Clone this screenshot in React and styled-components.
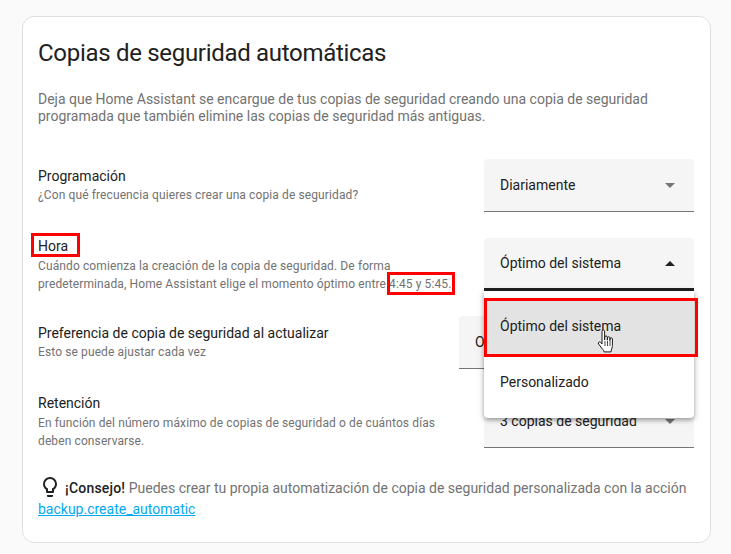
import React from "react";
import styled, { createGlobalStyle } from "styled-components";

const Global = createGlobalStyle`
  html, body { margin: 0; padding: 0; background: #fafafa; }
  body { font-family: Roboto, "Liberation Sans", sans-serif; color: #212121; }
  * { box-sizing: border-box; }
`;

const Page = styled.div`
  width: 731px;
  height: 554px;
  padding: 16px 20px 11px 22px;
  position: relative;
  overflow: hidden;
`;

const Card = styled.section`
  width: 689px;
  height: 527px;
  background: #fff;
  border: 1px solid #e0e0e0;
  border-radius: 12px;
  padding: 20px 16px 0 15px;
`;

const Title = styled.h1`
  margin: 0;
  font-size: 24px;
  font-weight: 400;
  line-height: 32px;
  letter-spacing: -0.3px;
  color: #212121;
`;

const Intro = styled.p`
  margin: 22px 0 0;
  font-size: 14px;
  line-height: 17px;
  color: #727272;
`;

const Rows = styled.div`
  margin-top: 34px;
  display: flex;
  flex-direction: column;
`;

const Row = styled.div`
  height: 53px;
  margin-top: ${(p) => p.$top || 0}px;
  display: flex;
  align-items: center;
  justify-content: space-between;
  gap: 16px;
`;

const RowText = styled.div`
  flex: 1;
  min-width: 0;
  padding-bottom: ${(p) => (p.$single ? 2 : 0)}px;
`;

const RowLabel = styled.div`
  font-size: 14px;
  line-height: 20px;
  color: #212121;
  ${(p) => p.$tight && "margin: -1px 0 1px;"}
`;

const RowHint = styled.div`
  font-size: 12px;
  line-height: 18px;
  letter-spacing: 0.11px;
  color: #727272;
`;

const Select = styled.div`
  flex: none;
  width: ${(p) => p.$width || 210}px;
  height: 53px;
  display: flex;
  align-items: center;
  justify-content: space-between;
  padding: 0 19px 0 16px;
  background: #f5f5f5;
  border-radius: 4px 4px 0 0;
  border-bottom: ${(p) => (p.$open ? "3px solid #212121" : "1px solid #757575")};
  font-size: 14px;
  color: #212121;
  white-space: nowrap;
  overflow: hidden;
`;

const Arrow = styled.span`
  flex: none;
  width: 0;
  height: 0;
  border-left: 5px solid transparent;
  border-right: 5px solid transparent;
  ${(p) =>
    p.$up
      ? "border-bottom: 5px solid #212121;"
      : "border-top: 5px solid #757575;"}
`;

const Menu = styled.div`
  position: absolute;
  left: 484px;
  top: 291px;
  width: 210px;
  padding: 7px 0 8px;
  background: #fff;
  border-radius: 0 0 4px 4px;
  box-shadow: 0 2px 4px rgba(0, 0, 0, 0.3), 0 1px 8px rgba(0, 0, 0, 0.15);
`;

const MenuItem = styled.div`
  height: 56px;
  display: flex;
  align-items: center;
  padding: 0 16px;
  font-size: 14px;
  color: #212121;
  background: ${(p) => (p.$active ? "#e3e3e3" : "#fff")};
`;

const Tip = styled.p`
  margin: 27px 0 0;
  font-size: 14px;
  line-height: 21px;
  color: #727272;
`;

const TipIcon = styled.svg`
  width: 24px;
  height: 24px;
  vertical-align: -6px;
  margin-right: 3px;
  fill: #212121;
`;

const TipLead = styled.strong`
  font-weight: 500;
  letter-spacing: 0.2px;
  color: #212121;
`;

const TipLink = styled.a`
  color: #03a9f4;
  text-decoration: underline;
`;

const Callout = styled.div`
  position: absolute;
  left: ${(p) => p.$x}px;
  top: ${(p) => p.$y}px;
  width: ${(p) => p.$w}px;
  height: ${(p) => p.$h}px;
  border: 3px solid #ff0000;
  pointer-events: none;
`;

const Cursor = styled.svg`
  position: absolute;
  left: 597px;
  top: 329px;
  width: 20px;
  height: 26px;
`;

export default function App() {
  return (
    <Page>
      <Global />
      <Card>
        <Title>Copias de seguridad automáticas</Title>
        <Intro>
          Deja que Home Assistant se encargue de tus copias de seguridad creando una copia de seguridad
          <br />
          programada que también elimine las copias de seguridad más antiguas.
        </Intro>
        <Rows>
          <Row>
            <RowText $single>
              <RowLabel>Programación</RowLabel>
              <RowHint>¿Con qué frecuencia quieres crear una copia de seguridad?</RowHint>
            </RowText>
            <Select>
              Diariamente
              <Arrow />
            </Select>
          </Row>
          <Row $top={26}>
            <RowText>
              <RowLabel $tight>Hora</RowLabel>
              <RowHint>
                Cuándo comienza la creación de la copia de seguridad. De forma
                <br />
                predeterminada, Home Assistant elige el momento óptimo entre 4:45 y 5:45.
              </RowHint>
            </RowText>
            <Select $open>
              Óptimo del sistema
              <Arrow $up />
            </Select>
          </Row>
          <Row $top={25}>
            <RowText $single>
              <RowLabel>Preferencia de copia de seguridad al actualizar</RowLabel>
              <RowHint>Esto se puede ajustar cada vez</RowHint>
            </RowText>
            <Select $width={235}>
              Omitir copia de seguridad
              <Arrow />
            </Select>
          </Row>
          <Row $top={26}>
            <RowText>
              <RowLabel $tight>Retención</RowLabel>
              <RowHint>
                En función del número máximo de copias de seguridad o de cuántos días
                <br />
                deben conservarse.
              </RowHint>
            </RowText>
            <Select>
              3 copias de seguridad
              <Arrow />
            </Select>
          </Row>
        </Rows>
        <Tip>
          <TipIcon viewBox="0 0 24 24" aria-hidden="true">
            <path d="M12,2A7,7 0 0,0 5,9C5,11.38 6.19,13.47 8,14.74V17A1,1 0 0,0 9,18H15A1,1 0 0,0 16,17V14.74C17.81,13.47 19,11.38 19,9A7,7 0 0,0 12,2M9,21A1,1 0 0,0 10,22H14A1,1 0 0,0 15,21V20H9V21M12,4A5,5 0 0,1 17,9C17,11 15.81,12.77 14,13.58V16H10V13.58C8.19,12.77 7,11 7,9A5,5 0 0,1 12,4Z" />
          </TipIcon>
          <TipLead>¡Consejo!</TipLead> Puedes crear tu propia automatización de copia de seguridad personalizada con la acción
          <br />
          <TipLink href="#">backup.create_automatic</TipLink>
        </Tip>
      </Card>
      <Menu>
        <MenuItem $active>Óptimo del sistema</MenuItem>
        <MenuItem>Personalizado</MenuItem>
      </Menu>
      <Callout $x={31} $y={233} $w={49} $h={24} />
      <Callout $x={387} $y={272} $w={68} $h={23} />
      <Callout $x={484} $y={298} $w={214} $h={59} />
      <Cursor viewBox="0 0 20 26" aria-hidden="true">
        <path
          d="M5 2.2c0-1.6 2.6-1.6 2.6 0V11l.2-3c0-1.4 2.5-1.4 2.5 0v3.2l.2-2.4c0-1.4 2.4-1.4 2.4 0v2.8l.2-1.8c0-1.3 2.3-1.3 2.3 0v6.7c0 2-.6 3-1.1 4.4-.2.7-.3 1.3-.3 2H7c0-1.2-.9-2-1.7-3L1.6 15c-1-1.6 1-2.9 2.1-1.6L5 15z"
          fill="#fff"
          stroke="#1a1a1a"
          strokeWidth="1"
          strokeLinejoin="round"
        />
        <path d="M8 12v5M10.5 12v5M13 12v5" stroke="#1a1a1a" strokeWidth="0.8" fill="none" />
      </Cursor>
    </Page>
  );
}
